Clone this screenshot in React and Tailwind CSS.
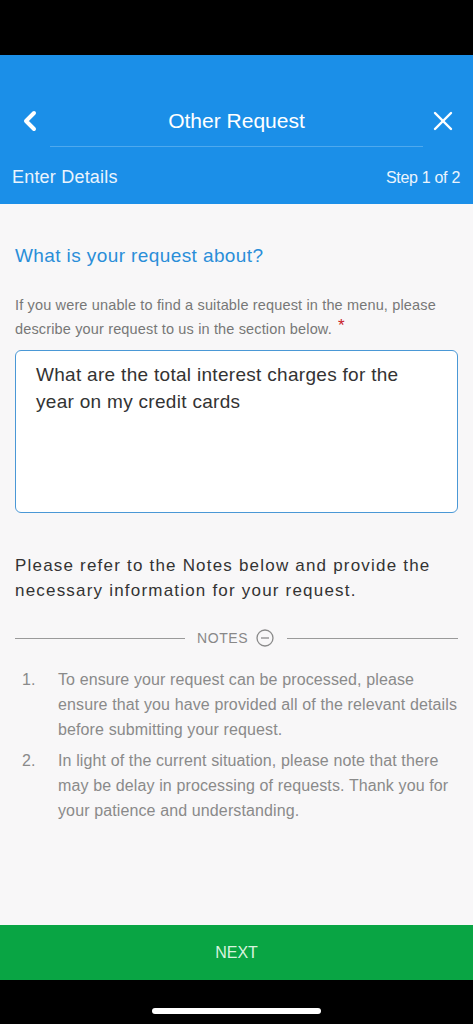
import { ChevronLeft, X } from "lucide-react";

const notes = [
  "To ensure your request can be processed, please ensure that you have provided all of the relevant details before submitting your request.",
  "In light of the current situation, please note that there may be delay in processing of requests. Thank you for your patience and understanding.",
];

export default function App() {
  return (
    <div
      className="flex h-[1024px] w-[473px] flex-col bg-black"
      style={{ fontFamily: '"Liberation Sans", Arial, sans-serif' }}
    >
      {/* status bar area */}
      <div className="h-[55px] shrink-0 bg-black" />

      {/* Header */}
      <header className="flex h-[149px] shrink-0 flex-col bg-[#1b8fe8] text-white">
        <div className="mt-[46px] flex h-[40px] items-center justify-between px-[14px]">
          <ChevronLeft className="h-8 w-8" strokeWidth={3} />
          <span className="text-[21px] font-light">Other Request</span>
          <X className="h-8 w-8" strokeWidth={1.8} />
        </div>
        <div className="mx-[50px] mt-[5px] h-px bg-[#4ea9ee]" />
        <div className="mt-[17px] flex items-center justify-between pl-[12px] pr-[13px]">
          <span className="text-[18px] tracking-[0.2px] text-[#eaf4fd]">Enter Details</span>
          <span className="text-[16px] tracking-[-0.3px] text-[#eaf4fd]">Step 1 of 2</span>
        </div>
      </header>

      {/* Body */}
      <main className="flex flex-1 flex-col bg-[#f8f7f8] px-[15px]">
        <h2 className="mt-[38px] text-[19px] tracking-[0.4px] text-[#2a8ed8]">What is your request about?</h2>
        <p className="mt-[22px] text-[14.5px] leading-[24px] tracking-[0.15px] text-[#777]">
          If you were unable to find a suitable request in the menu, please describe your request to us in the
          section below.
          <span className="ml-[6px] inline-block align-top text-[17px] leading-[17px] text-[#c8202a]">*</span>
        </p>

        <div className="mt-[9px] h-[163px] rounded-[6px] border-[1.5px] border-[#4a98d6] bg-white px-[20px] pb-[8px] pt-[10px]">
          <p className="text-[19px] leading-[27px] tracking-[0.3px] text-[#333]">
            What are the total interest charges for the year on my credit cards
          </p>
        </div>

        <p className="mt-[40px] text-[17px] leading-[25px] tracking-[1.2px] text-[#333]">
          Please refer to the Notes below and provide the necessary information for your request.
        </p>

        <div className="mt-[25px] flex items-center">
          <div className="h-px w-[170px] bg-[#9a9a9a]" />
          <span className="ml-[12px] text-[14px] tracking-[0.6px] text-[#888]">NOTES</span>
          <svg className="ml-[8px] h-[18px] w-[18px]" viewBox="0 0 18 18" fill="none">
            <circle cx="9" cy="9" r="8" stroke="#8a8a8a" strokeWidth="1.3" />
            <line x1="5" y1="9" x2="13" y2="9" stroke="#8a8a8a" strokeWidth="1.3" />
          </svg>
          <div className="ml-[13px] h-px flex-1 bg-[#9a9a9a]" />
        </div>

        <ol className="mt-[18px] flex flex-col gap-[6px]">
          {notes.map((n, i) => (
            <li key={i} className="flex text-[16px] leading-[25px] tracking-[0.12px] text-[#8a8a8a]">
              <span className="w-[43px] shrink-0 pl-[7px]">{i + 1}.</span>
              <span>{n}</span>
            </li>
          ))}
        </ol>
      </main>

      {/* Next button */}
      <button className="flex h-[55px] shrink-0 items-center justify-center bg-[#09a544] text-[16px] text-[#d8f3df]">
        NEXT
      </button>

      {/* Home indicator */}
      <div className="flex h-[44px] shrink-0 items-end justify-center bg-black pb-[10px]">
        <div className="h-[6px] w-[169px] rounded-full bg-white" />
      </div>
    </div>
  );
}
